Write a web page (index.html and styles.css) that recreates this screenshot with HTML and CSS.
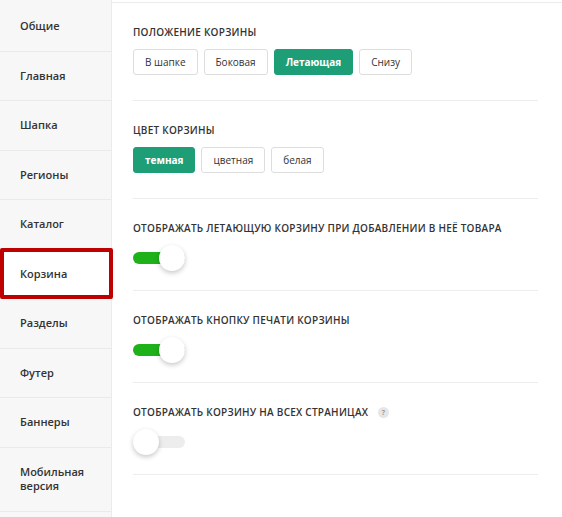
FILE: index.html
```html
<!DOCTYPE html>
<html lang="ru">

<head>
  <meta charset="UTF-8" />
  <meta name="viewport" content="width=device-width, initial-scale=1.0" />
  <title>Настройки корзины</title>
  <link rel="stylesheet" href="styles.css">
</head>

<body>
  <div class="settings">
    <ul class="side-menu">
      <li class="side-item">Общие</li>
      <li class="side-item">Главная</li>
      <li class="side-item">Шапка</li>
      <li class="side-item">Регионы</li>
      <li class="side-item">Каталог</li>
      <li class="side-item active">Корзина</li>
      <li class="side-item">Разделы</li>
      <li class="side-item">Футер</li>
      <li class="side-item">Баннеры</li>
      <li class="side-item">Мобильная<br>версия</li>
    </ul>

    <div class="panel">
      <div class="option">
        <div class="option-title">Положение корзины</div>
        <div class="btn-group">
          <span class="btn">В шапке</span>
          <span class="btn">Боковая</span>
          <span class="btn selected">Летающая</span>
          <span class="btn">Снизу</span>
        </div>
      </div>

      <div class="option">
        <div class="option-title">Цвет корзины</div>
        <div class="btn-group">
          <span class="btn selected">темная</span>
          <span class="btn">цветная</span>
          <span class="btn">белая</span>
        </div>
      </div>

      <div class="option option-switch">
        <div class="option-title">Отображать летающую корзину при добавлении в неё товара</div>
        <span class="toggle on"><span class="knob"></span></span>
      </div>

      <div class="option option-switch">
        <div class="option-title">Отображать кнопку печати корзины</div>
        <span class="toggle on"><span class="knob"></span></span>
      </div>

      <div class="option option-switch">
        <div class="option-title">Отображать корзину на всех страницах <span class="hint">?</span></div>
        <span class="toggle"><span class="knob"></span></span>
      </div>
    </div>
  </div>
</body>

</html>
```

FILE: styles.css
```css
body {
  margin: 0;
  padding: 0;
  background-color: #ffffff;
  font-family: 'Open Sans', 'Liberation Sans', sans-serif;
  color: #333333;
}

.settings {
  display: flex;
  min-height: 517px;
  padding-top: 2px;
  box-sizing: border-box;
}

/* Left menu */
.side-menu {
  list-style: none;
  margin: -2px 0 0 0;
  padding: 2px 0 0 0;
  width: 111px;
  flex-shrink: 0;
  background-color: #f7f7f7;
  border-right: 1px solid #ebebeb;
}

.side-item {
  position: relative;
  padding: 17px 10px 17px 20px;
  font-size: 11px;
  font-weight: 600;
  line-height: 14.5px;
  border-bottom: 1px solid #eaeaea;
  cursor: pointer;
}

.side-item.active {
  background-color: #ffffff;
  margin-right: -1px;
}

/* red frame drawn over the active row */
.side-item.active::after {
  content: "";
  position: absolute;
  top: -2px;
  left: 0;
  right: -1px;
  bottom: -1px;
  border: 4px solid #bf0000;
  border-radius: 2px;
}

/* Right panel */
.panel {
  flex-grow: 1;
  padding: 0 24px 0 21px;
  border-top: 1px solid #ebebeb;
  align-self: flex-start;
}

.option {
  padding: 23px 0 25px 0;
  border-bottom: 1px solid #ededed;
}

.option-switch {
  padding-bottom: 19px;
}

.option-title {
  font-size: 10px;
  font-weight: 600;
  text-transform: uppercase;
  letter-spacing: 0.25px;
  line-height: 12px;
  height: 12px;
  margin-bottom: 11px;
  color: #333333;
}

/* little "?" badge next to a title */
.hint {
  display: inline-block;
  width: 11px;
  height: 11px;
  margin-left: 7px;
  border-radius: 50%;
  background-color: #e6e6e6;
  color: #8c8c8c;
  font-size: 7px;
  line-height: 11px;
  text-align: center;
  vertical-align: top;
  transform: translateY(1px);
}

.btn-group {
  display: flex;
  gap: 6px;
}

.btn {
  display: inline-block;
  height: 26px;
  line-height: 24px;
  padding: 0 11px;
  border: 1px solid #dddddd;
  border-radius: 3px;
  font-size: 10px;
  color: #333333;
  box-sizing: border-box;
  cursor: pointer;
}

.btn.selected {
  background-color: #1d9e77;
  border-color: #1d9e77;
  color: #ffffff;
  font-weight: 700;
}

/* Switch */
.toggle {
  position: relative;
  display: block;
  width: 52px;
  height: 26px;
}

.toggle::before {
  content: "";
  position: absolute;
  left: 0;
  right: 0;
  top: 7px;
  height: 12px;
  border-radius: 6px;
  background-color: #ededed;
}

.toggle.on::before {
  background-color: #1fb11a;
}

.toggle .knob {
  position: absolute;
  top: 0;
  left: 0;
  width: 26px;
  height: 26px;
  border-radius: 50%;
  background-color: #ffffff;
  box-shadow: 0 2px 5px rgba(0, 0, 0, 0.22);
}

.toggle.on .knob {
  left: 26px;
}
```
